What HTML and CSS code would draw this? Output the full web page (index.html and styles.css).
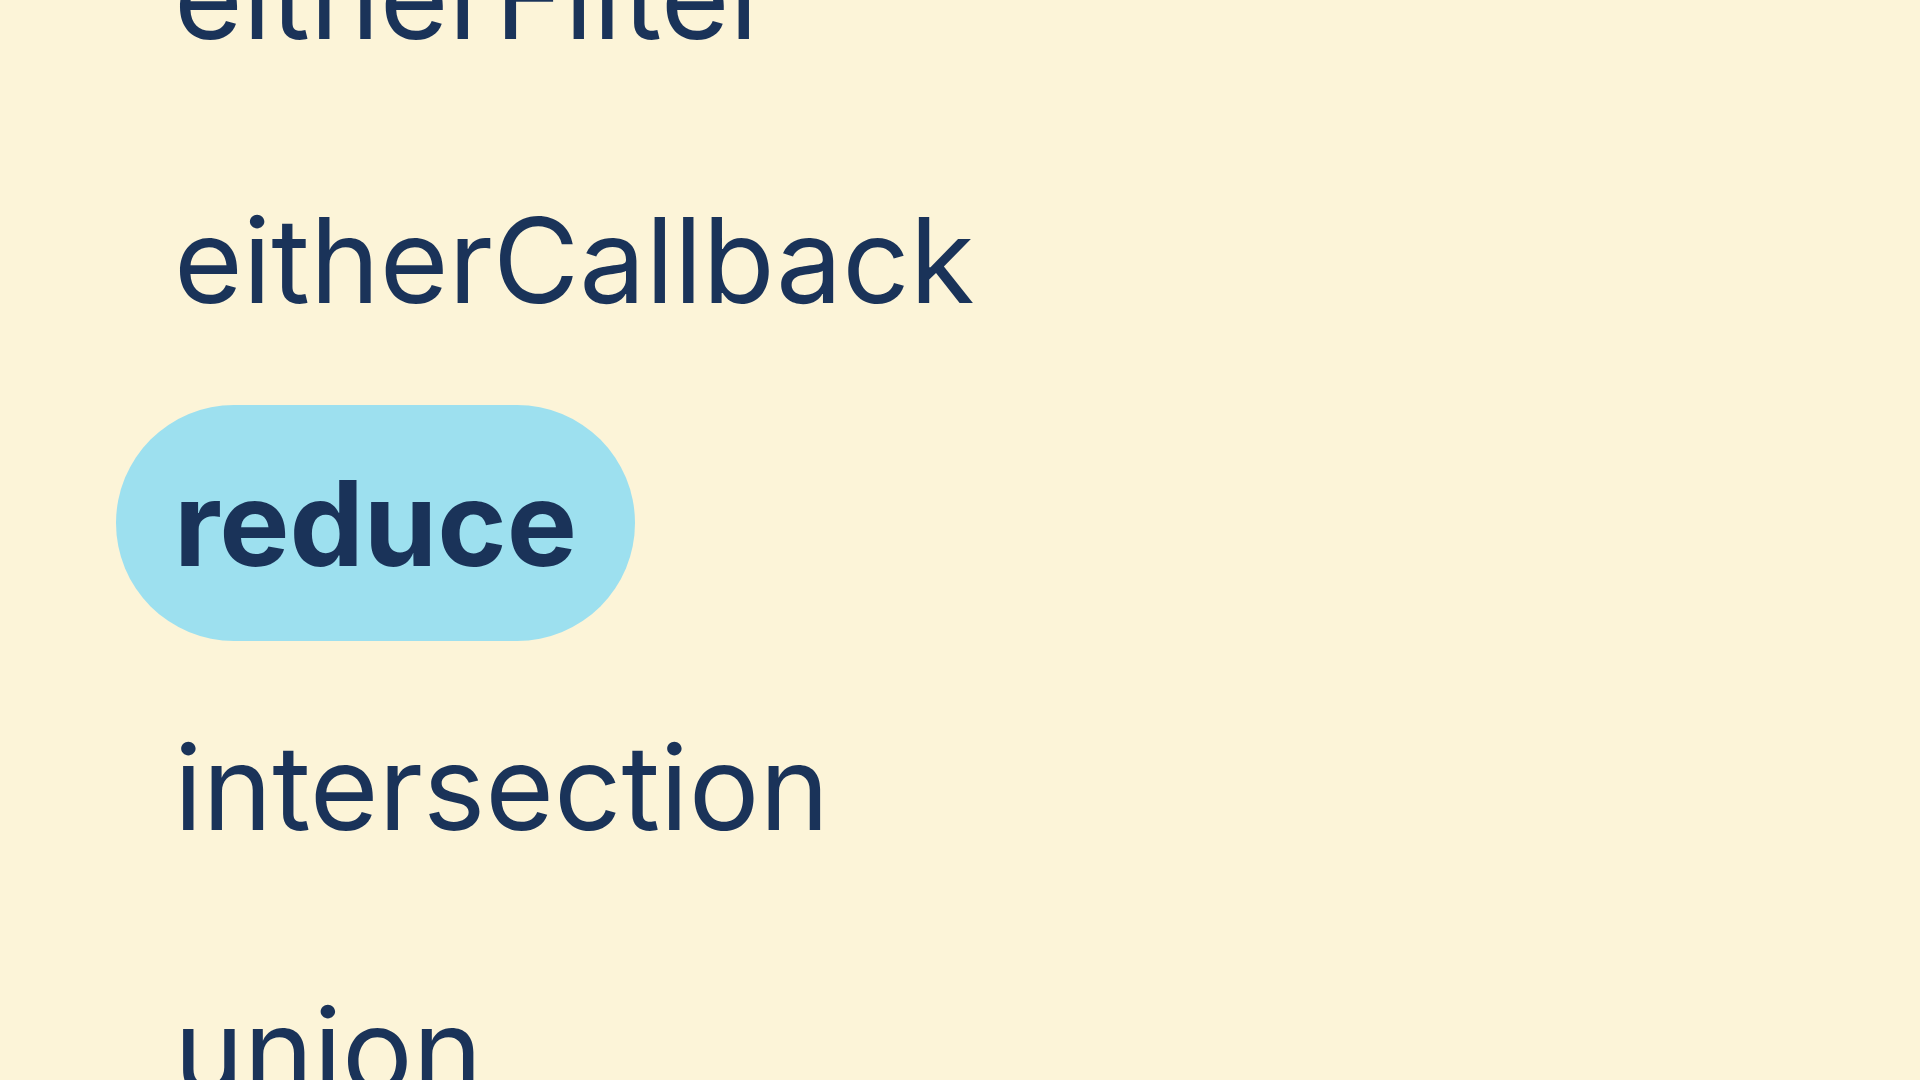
FILE: index.html
```html
<!DOCTYPE html>
<html lang="en">
<head>
<meta charset="utf-8">
<title>List</title>
<link rel="stylesheet" href="styles.css">
</head>
<body>
<ul class="menu">
  <li class="item">eitherFilter</li>
  <li class="item">eitherCallback</li>
  <li class="item active">reduce</li>
  <li class="item">intersection</li>
  <li class="item">union</li>
</ul>
</body>
</html>
```
FILE: styles.css
```css
html, body {
  margin: 0;
  padding: 0;
  width: 1920px;
  height: 1080px;
  overflow: hidden;
  background: #fcf4d8;
}
.menu {
  list-style: none;
  margin: -122px 0 0 0;
  padding: 0 0 0 116px;
  display: flex;
  flex-direction: column;
  align-items: flex-start;
  gap: 27.5px;
  font-family: Inter, "Noto Sans", sans-serif;
}
.item {
  height: 236px;
  display: flex;
  align-items: center;
  padding: 0 58px;
  border-radius: 118px;
  font-size: 118px;
  font-weight: 400;
  color: #1a3359;
  white-space: nowrap;
}
.item.active {
  background: #9de0ef;
  font-weight: 700;
}
```
